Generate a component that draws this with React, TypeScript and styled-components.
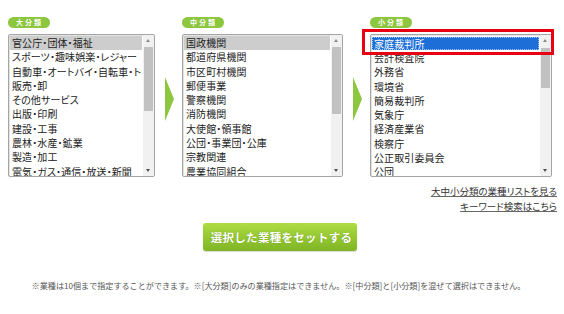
import React from "react"
import { createGlobalStyle, styled } from "styled-components"

const GlobalStyle = createGlobalStyle`
  html, body {
    margin: 0;
    padding: 0;
    background: #fff;
  }
  body {
    font-family: "Noto Sans CJK JP", "Noto Sans", sans-serif;
    color: #222;
  }
`

interface Category {
  label: string
  width: number
  items: string[]
  selected: "gray" | "blue"
  thumb: [number, number]
  highlight?: boolean
}

const categories: Category[] = [
  {
    label: "大分類",
    width: 147,
    selected: "gray",
    thumb: [12, 76],
    items: [
      "官公庁・団体・福祉",
      "スポーツ・趣味娯楽・レジャー",
      "自動車・オートバイ・自転車・トラック",
      "販売・卸",
      "その他サービス",
      "出版・印刷",
      "建設・工事",
      "農林・水産・鉱業",
      "製造・加工",
      "電気・ガス・通信・放送・新聞",
    ],
  },
  {
    label: "中分類",
    width: 161,
    selected: "gray",
    thumb: [12, 79],
    items: [
      "国政機関",
      "都道府県機関",
      "市区町村機関",
      "郵便事業",
      "警察機関",
      "消防機関",
      "大使館・領事館",
      "公団・事業団・公庫",
      "宗教関連",
      "農業協同組合",
    ],
  },
  {
    label: "小分類",
    width: 182,
    selected: "blue",
    thumb: [13, 53],
    highlight: true,
    items: [
      "家庭裁判所",
      "会計検査院",
      "外務省",
      "環境省",
      "簡易裁判所",
      "気象庁",
      "経済産業省",
      "検察庁",
      "公正取引委員会",
      "公団",
    ],
  },
]

const App: React.FC = () => {
  return (
    <Page>
      <GlobalStyle />
      <Selectors>
        {categories.map((cat, i) => (
          <React.Fragment key={cat.label}>
            {i > 0 && <Arrow />}
            <Column $width={cat.width}>
              <Label>{cat.label}</Label>
              <BoxWrap>
                <ListBox>
                  <Items>
                    {cat.items.map((item, j) => (
                      <Item key={item} $selected={j === 0 ? cat.selected : undefined}>
                        <span>{item}</span>
                      </Item>
                    ))}
                  </Items>
                  <ScrollBar>
                    <ScrollUp />
                    <Thumb
                      style={{ top: cat.thumb[0], height: cat.thumb[1] - cat.thumb[0] }}
                    />
                    <ScrollDown />
                  </ScrollBar>
                </ListBox>
                {cat.highlight && <Highlight />}
              </BoxWrap>
            </Column>
          </React.Fragment>
        ))}
      </Selectors>

      <Links>
        <TextLink href="#">大中小分類の業種リストを見る</TextLink>
        <TextLink href="#">キーワード検索はこちら</TextLink>
      </Links>

      <ButtonRow>
        <SetButton type="button">選択した業種をセットする</SetButton>
      </ButtonRow>

      <Note>
        ※業種は10個まで指定することができます。※[大分類]のみの業種指定はできません。※[中分類]と[小分類]を混ぜて選択はできません。
      </Note>
    </Page>
  )
}

const Page = styled.div`
  width: 564px;
  height: 314px;
  box-sizing: border-box;
  padding: 17px 7px 0 8px;
  overflow: hidden;
`

const Selectors = styled.div`
  display: flex;
  align-items: flex-start;
`

const Column = styled.div<{ $width: number }>`
  width: ${({ $width }) => $width}px;
  display: flex;
  flex-direction: column;
  gap: 6px;
`

const Label = styled.div`
  align-self: flex-start;
  width: 42px;
  height: 11px;
  border-radius: 6px;
  background: #8dc63f;
  color: #fff;
  font-size: 7px;
  font-weight: 700;
  letter-spacing: 2px;
  line-height: 11px;
  text-align: center;
  padding-left: 1px;
  box-sizing: border-box;
`

const Arrow = styled.div`
  width: 0;
  height: 0;
  margin: 60px 8px 0 10px;
  border-top: 22px solid transparent;
  border-bottom: 22px solid transparent;
  border-left: 9px solid #8dc63f;
  flex: none;
`

const BoxWrap = styled.div`
  position: relative;
`

const ListBox = styled.div`
  height: 143px;
  box-sizing: border-box;
  border: 1px solid #a5a5a5;
  border-radius: 2px;
  box-shadow: inset 1px 1px 0 #e2e2e2;
  display: flex;
  overflow: hidden;
  background: #fff;
`

const Items = styled.div`
  flex: 1;
  min-width: 0;
  padding: 1px 1px 0 1px;
  overflow: hidden;
`

const Item = styled.div<{ $selected?: "gray" | "blue" }>`
  height: 14.3px;
  line-height: 14.3px;
  font-size: 10px;
  font-feature-settings: "palt";
  letter-spacing: 0.1px;
  white-space: nowrap;
  overflow: hidden;
  padding-left: 2px;
  color: #222;
  background: ${({ $selected }) =>
    $selected === "gray" ? "#cdcdcd" : $selected === "blue" ? "#1e6ed8" : "transparent"};

  ${({ $selected }) =>
    $selected === "blue" &&
    `
    color: #fff;
    outline: 1px dotted #9cc4ff;
    outline-offset: -1px;
    margin: 1px 0;
    height: 13px;
    line-height: 13px;
  `}
`

const ScrollBar = styled.div`
  position: relative;
  width: 11px;
  flex: none;
  background: #f1f1f1;
`

const ScrollUp = styled.div`
  position: absolute;
  top: 4px;
  left: 3px;
  width: 0;
  height: 0;
  border-left: 2.5px solid transparent;
  border-right: 2.5px solid transparent;
  border-bottom: 3px solid #8a8a8a;
`

const ScrollDown = styled.div`
  position: absolute;
  bottom: 4px;
  left: 3px;
  width: 0;
  height: 0;
  border-left: 2.5px solid transparent;
  border-right: 2.5px solid transparent;
  border-top: 3px solid #505050;
`

const Thumb = styled.div`
  position: absolute;
  left: 1px;
  right: 1px;
  background: #c1c1c1;
`

const Highlight = styled.div`
  position: absolute;
  left: -8px;
  right: -2px;
  top: -5px;
  height: 26px;
  border: 3px solid #e60012;
  box-sizing: border-box;
  pointer-events: none;
`

const Links = styled.div`
  display: flex;
  flex-direction: column;
  align-items: flex-end;
  gap: 2px;
  margin-top: 8px;
`

const TextLink = styled.a`
  font-size: 9.5px;
  line-height: 13px;
  color: #333;
  text-decoration: underline;
  text-decoration-color: #666;
  font-feature-settings: "palt";
`

const ButtonRow = styled.div`
  display: flex;
  justify-content: center;
  margin-top: 10px;
  padding-right: 6px;
`

const SetButton = styled.button`
  width: 154px;
  height: 28px;
  border: none;
  border-radius: 3px;
  background: linear-gradient(to bottom, #b0dc42 0%, #95c832 50%, #7fb426 100%);
  box-shadow: 0 1px 1px rgba(0, 0, 0, 0.15);
  color: #fff;
  font-family: "Noto Sans CJK JP", sans-serif;
  font-size: 11.5px;
  font-weight: 700;
  letter-spacing: 0.3px;
  text-shadow: 0 0 1px rgba(60, 100, 0, 0.5);
  padding: 0 0 0 4px;
  cursor: pointer;
`

const Note = styled.p`
  margin: 29px 0 0;
  padding-right: 8px;
  font-size: 8.1px;
  line-height: 12px;
  color: #555;
  text-align: center;
  white-space: nowrap;
`

export default App
